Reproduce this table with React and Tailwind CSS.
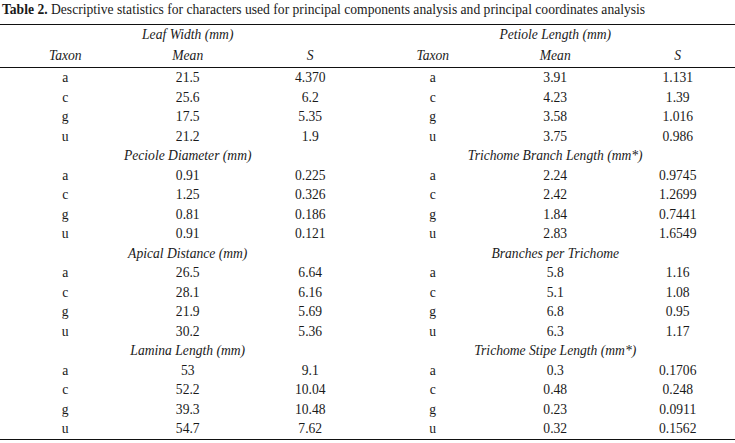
import React from 'react';

const GROUPS = [
  {
    left: { title: 'Leaf Width (mm)', rows: [['a', '21.5', '4.370'], ['c', '25.6', '6.2'], ['g', '17.5', '5.35'], ['u', '21.2', '1.9']] },
    right: { title: 'Petiole Length (mm)', rows: [['a', '3.91', '1.131'], ['c', '4.23', '1.39'], ['g', '3.58', '1.016'], ['u', '3.75', '0.986']] },
  },
  {
    left: { title: 'Peciole Diameter (mm)', rows: [['a', '0.91', '0.225'], ['c', '1.25', '0.326'], ['g', '0.81', '0.186'], ['u', '0.91', '0.121']] },
    right: { title: 'Trichome Branch Length (mm*)', rows: [['a', '2.24', '0.9745'], ['c', '2.42', '1.2699'], ['g', '1.84', '0.7441'], ['u', '2.83', '1.6549']] },
  },
  {
    left: { title: 'Apical Distance (mm)', rows: [['a', '26.5', '6.64'], ['c', '28.1', '6.16'], ['g', '21.9', '5.69'], ['u', '30.2', '5.36']] },
    right: { title: 'Branches per Trichome', rows: [['a', '5.8', '1.16'], ['c', '5.1', '1.08'], ['g', '6.8', '0.95'], ['u', '6.3', '1.17']] },
  },
  {
    left: { title: 'Lamina Length (mm)', rows: [['a', '53', '9.1'], ['c', '52.2', '10.04'], ['g', '39.3', '10.48'], ['u', '54.7', '7.62']] },
    right: { title: 'Trichome Stipe Length (mm*)', rows: [['a', '0.3', '0.1706'], ['c', '0.48', '0.248'], ['g', '0.23', '0.0911'], ['u', '0.32', '0.1562']] },
  },
];

function Cell({ children, italic }) {
  return (
    <div className={`flex items-center justify-center pl-[8px] ${italic ? 'italic' : ''}`}>
      {children}
    </div>
  );
}

function GroupHeader({ left, right, first }) {
  return (
    <div className={`grid grid-cols-6 italic ${first ? 'h-[21px]' : 'h-[19.5px]'}`}>
      <div className="col-span-3 flex items-center justify-center pl-[8px]">{left}</div>
      <div className="col-span-3 flex items-center justify-center pl-[8px]">{right}</div>
    </div>
  );
}

export default function App() {
  return (
    <div
      className="w-[735px] h-[443px] bg-white text-[#1a1a1a] text-[13.6px] overflow-hidden"
      style={{ fontFamily: '"Liberation Serif", "Times New Roman", serif' }}
    >
      <div className="h-[20px] leading-[20px] pl-[2px] whitespace-nowrap">
        <span className="font-bold">Table 2.</span> Descriptive statistics for characters used for principal components analysis and principal coordinates analysis
      </div>
      <div className="mt-[4px] border-t border-[#111]" />

      {GROUPS.map((g, gi) => (
        <React.Fragment key={gi}>
          <GroupHeader left={g.left.title} right={g.right.title} first={gi === 0} />
          {gi === 0 && (
            <>
              <div className="grid grid-cols-6 h-[21px]">
                <Cell italic>Taxon</Cell>
                <Cell italic>Mean</Cell>
                <Cell italic>S</Cell>
                <Cell italic>Taxon</Cell>
                <Cell italic>Mean</Cell>
                <Cell italic>S</Cell>
              </div>
              <div className="border-t border-[#111]" />
            </>
          )}
          {g.left.rows.map((r, ri) => (
            <div key={ri} className="grid grid-cols-6 h-[19.5px]">
              <Cell>{r[0]}</Cell>
              <Cell>{r[1]}</Cell>
              <Cell>{r[2]}</Cell>
              <Cell>{g.right.rows[ri][0]}</Cell>
              <Cell>{g.right.rows[ri][1]}</Cell>
              <Cell>{g.right.rows[ri][2]}</Cell>
            </div>
          ))}
        </React.Fragment>
      ))}
      <div className="border-t border-[#111]" />
    </div>
  );
}
